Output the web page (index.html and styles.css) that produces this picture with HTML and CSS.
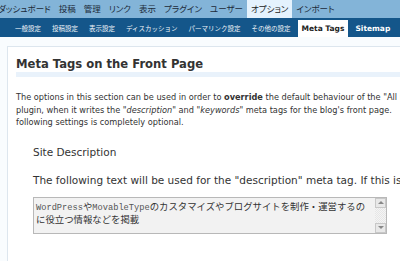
FILE: index.html
```html
<!DOCTYPE html>
<html>
<head>
	<meta charset="UTF-8">
	<link rel="stylesheet" href="styles.css">
</head>
<body>
	<div class="admin_menu">
		<span class="menu_item first">ダッシュボード</span>
		<span class="menu_item">投稿</span>
		<span class="menu_item">管理</span>
		<span class="menu_item">リンク</span>
		<span class="menu_item">表示</span>
		<span class="menu_item">プラグイン</span>
		<span class="menu_item">ユーザー</span>
		<span class="menu_item current">オプション</span>
		<span class="menu_item">インポート</span>
	</div>
	<div class="sub_menu">
		<span class="sub_item">一般設定</span>
		<span class="sub_item">投稿設定</span>
		<span class="sub_item">表示設定</span>
		<span class="sub_item">ディスカッション</span>
		<span class="sub_item">パーマリンク設定</span>
		<span class="sub_item">その他の設定</span>
		<span class="sub_item current latin">Meta Tags</span>
		<span class="sub_item latin">Sitemap</span>
	</div>

	<div class="page">
		<div class="wrap">
			<h2>Meta Tags on the Front Page</h2>
			<p class="intro">
				The options in this section can be used in order to <b>override</b> the default behaviour of the "All in One SEO Pack"<br>
				plugin, when it writes the "<i>description</i>" and "<i>keywords</i>" meta tags for the blog's front page.<br>
				following settings is completely optional.
			</p>
			<div class="field">
				<h3>Site Description</h3>
				<p class="field_note">The following text will be used for the "description" meta tag. If this is left empty</p>
				<div class="textbox">
					<div class="textbox_text"><code>WordPress</code>や<code>MovableType</code>のカスタマイズやブログサイトを制作・運営するの<br>に役立つ情報などを掲載</div>
					<div class="scrollbar">
						<span class="arrow up"></span>
						<span class="track"></span>
						<span class="arrow down"></span>
					</div>
				</div>
			</div>
		</div>
	</div>
</body>
</html>
```

FILE: styles.css
```css
body{
	margin:0;
	width:400px;
	height:261px;
	overflow:hidden;
	background:#f9fcfe;
	font-family:"DejaVu Sans","Noto Sans CJK JP",sans-serif;
	color:#333;
}

.admin_menu{
	display:flex;
	align-items:stretch;
	height:18px;
	background:#83b4d8;
	font-family:"Noto Sans CJK JP",sans-serif;
	font-feature-settings:"palt";
	font-size:8.5px;
	line-height:17px;
	color:#1c2a38;
	white-space:nowrap;
	overflow:hidden;
}
.menu_item{
	padding:0 4px;
}
.menu_item.first{
	margin-left:-6px;
}
.menu_item.current{
	background:#e4f2fd;
	color:#222;
}

.sub_menu{
	display:flex;
	align-items:flex-end;
	height:19px;
	background:#14568a;
	padding-left:11px;
	font-family:"Noto Sans CJK JP",sans-serif;
	font-size:6.5px;
	color:#eef3f8;
	white-space:nowrap;
	overflow:hidden;
}
.sub_item{
	padding:0 4px;
	margin-right:3px;
	line-height:17px;
}
.sub_item.latin{
	font-family:"DejaVu Sans",sans-serif;
	font-weight:bold;
	font-size:7.5px;
	color:#fff;
}
.sub_item.current{
	background:#fff;
	color:#222;
}

.page{
	padding:9px 0 0 7px;
}
.wrap{
	background:#fff;
	border:1px solid #dde6ee;
	border-right:none;
	height:300px;
	padding:9px 0 0 8px;
	white-space:nowrap;
}

h2{
	margin:0;
	font-size:11.6px;
	font-weight:bold;
	color:#333;
	line-height:16px;
	border-bottom:5px solid #e9f2fb;
	padding-bottom:0;
	width:480px;
}
.intro{
	margin:14px 0 0;
	font-size:8.2px;
	line-height:12.5px;
	color:#333;
}

.field{
	padding:16px 0 0 17px;
}
h3{
	margin:0;
	font-size:10.5px;
	font-weight:normal;
	line-height:14px;
	color:#333;
}
.field_note{
	margin:14px 0 0;
	font-size:10.5px;
	line-height:14px;
}

.textbox{
	display:flex;
	margin-top:10px;
	width:352px;
	height:35px;
	border:1px solid #b8b8b8;
	background:#f2f2f2;
}
.textbox_text{
	flex:1;
	padding:3px 2px;
	font-family:"Noto Sans CJK JP",sans-serif;
	font-size:9.4px;
	line-height:11px;
	color:#333;
}
.textbox_text code{
	font-family:"Liberation Mono",monospace;
	font-size:8.7px;
	color:#555;
}
.scrollbar{
	display:flex;
	flex-direction:column;
	width:11px;
	background:repeating-conic-gradient(#e6e6e6 0 25%,#f4f4f4 0 50%) 0 0/2px 2px;
}
.arrow{
	height:10px;
	background:#e8e8e8;
	border:1px solid #c8c8c8;
	box-sizing:border-box;
	display:flex;
	align-items:center;
	justify-content:center;
}
.arrow::after{
	content:"";
	border-left:3px solid transparent;
	border-right:3px solid transparent;
}
.arrow.up::after{
	border-bottom:3px solid #888;
}
.arrow.down::after{
	border-top:3px solid #888;
}
.track{
	flex:1;
}
```
